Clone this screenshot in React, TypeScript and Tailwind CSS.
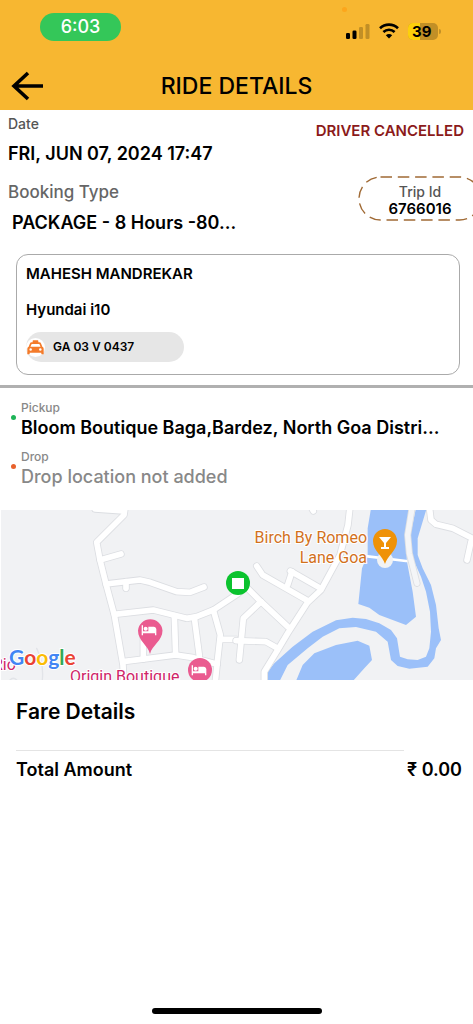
import { MdHotel } from "react-icons/md";

const StatusBar = () => {
  return (
    <div className="flex items-center justify-between pt-[13px] pl-10 pr-8">
      <div className="flex h-7 w-[81px] items-center justify-center rounded-full bg-[#34c759] text-lg font-medium text-white">
        6:03
      </div>
      <div className="relative flex items-center gap-[9px] pt-2">
        {/* mic indicator */}
        <span className="absolute -top-2 -left-1 size-[5px] rounded-full bg-[#fca61c]" />
        <svg width="24" height="16" viewBox="0 0 24 16">
          <rect x="0" y="10" width="4" height="6" rx="1.3" fill="#000" />
          <rect x="6.5" y="7.5" width="4" height="8.500" rx="1.3" fill="#000" />
          <rect x="13" y="4" width="4" height="12" rx="1.3" fill="#c18f26" />
          <rect x="19.500" y="1" width="4" height="15" rx="1.3" fill="#c18f26" />
        </svg>
        <svg width="20" height="16" viewBox="0 0 20 16" fill="none" stroke="#000" strokeWidth="2.6">
          <path d="M1 5.200C6 0.400 14 0.400 19 5.200" />
          <path d="M4.400 9C7.600 6 12.400 6 15.600 9" />
          <path d="M10 15.500L6.800 12.300C8.600 10.600 11.400 10.600 13.200 12.300Z" fill="#000" stroke="none" />
        </svg>
        <div className="flex items-center gap-px">
          <div className="flex h-[17px] w-[30px] overflow-hidden rounded-[5px] bg-[#c18f26]">
            <span className="h-full w-3 bg-[#fdd00a]" />
            <span className="-ml-2 text-[15px] leading-[17px] font-bold">39</span>
          </div>
          <span className="h-[5px] w-[2px] rounded-r-full bg-[#c18f26]" />
        </div>
      </div>
    </div>
  );
};

const Header = () => {
  return (
    <header className="h-[110px] bg-[#f7b731]">
      <StatusBar />
      <div className="mt-[29px] grid grid-cols-[48px_1fr_48px] items-center">
        <button type="button" aria-label="Back" className="pl-[11px]">
          <svg width="33" height="30" viewBox="0 0 33 30" fill="none" stroke="#000" strokeWidth="3.6">
            <path d="M17 2L3 15L17 28M3 15H32" />
          </svg>
        </button>
        <h1 className="text-center text-[23px] leading-8 font-medium">RIDE DETAILS</h1>
      </div>
    </header>
  );
};

const TripId = () => {
  return (
    <div className="relative mt-[33px] -mr-[18px] h-[45px] w-[124px] pt-[7px] text-center">
      <svg className="absolute inset-0" width="124" height="45" fill="none">
        <rect x="1" y="1" width="122" height="43" rx="21.500" stroke="#a06a35" strokeWidth="1.4" strokeDasharray="11.500 5.800" />
      </svg>
      <p className="text-sm leading-[18px] font-medium text-[#555]">Trip Id</p>
      <p className="text-[15px] leading-4 font-semibold">6766016</p>
    </div>
  );
};

const Summary = () => {
  return (
    <section className="flex justify-between pr-[9px] pl-2">
      <div className="pt-1">
        <p className="text-sm leading-5 font-medium text-[#555]">Date</p>
        <p className="mt-2 text-lg leading-6 font-semibold">FRI, JUN 07, 2024 17:47</p>
        <p className="mt-[14px] text-[17px] leading-6 font-medium text-[#666]">Booking Type</p>
        <p className="mt-[7px] pl-1 text-lg leading-6 font-semibold">PACKAGE - 8 Hours -80...</p>
      </div>
      <div className="flex flex-col items-end pt-[9px]">
        <p className="text-[15px] leading-6 font-semibold text-[#8b1a1a]">DRIVER CANCELLED</p>
        <TripId />
      </div>
    </section>
  );
};

const TaxiIcon = () => {
  return (
    <svg width="17" height="15" viewBox="0 0 51 45" className="shrink-0" fill="#f47b2a">
      <path
        fillRule="evenodd"
        d="M17 7V3Q17 1 19 1H32Q34 1 34 3V7H37Q41 7 42.500 11L46 20Q50 22 50 26V43H43V38H8V43H1V26Q1 22 5 20L8.500 11Q10 7 14 7ZM15 12Q13.500 12 13 13.500L10.500 20H40.500L38 13.500Q37.500 12 36 12ZM11 25A3.800 3.800 0 1 0 11 32.600A3.800 3.800 0 1 0 11 25ZM40 25A3.800 3.800 0 1 0 40 32.600A3.800 3.800 0 1 0 40 25Z"
      />
    </svg>
  );
};

const DriverCard = () => {
  return (
    <section className="mt-[19px] mr-[13px] ml-4 h-[121px] rounded-xl border border-[#aaa] pt-[7px] pl-[9px]">
      <p className="text-[15px] leading-6 font-semibold">MAHESH MANDREKAR</p>
      <p className="mt-3 text-[15px] leading-6 font-semibold">Hyundai i10</p>
      <div className="mt-[10px] flex h-[30px] w-[158px] items-center gap-2 rounded-full bg-[#e6e6e6]">
        <span className="flex size-[19px] items-center justify-center rounded-full bg-white">
          <TaxiIcon />
        </span>
        <span className="text-xs font-semibold">GA 03 V 0437</span>
      </div>
    </section>
  );
};

const Stop = ({ label, place, dot, muted }: { label: string; place: string; dot: string; muted?: boolean }) => {
  return (
    <div className="flex items-center gap-[5px]">
      <span className={`mb-[6px] size-[5px] shrink-0 rounded-full ${dot}`} />
      <div className="min-w-0">
        <p className="text-xs leading-4 font-medium text-[#888]">{label}</p>
        <p className={muted ? "text-lg leading-6 font-medium text-[#888]" : "truncate text-lg leading-6 font-semibold"}>
          {place}
        </p>
      </div>
    </div>
  );
};

const roadsLeft = [
  "M285 12L370 18",
  "M375 10L372 30L290 112L300 165L318 237L343 330L369 480L372 540",
  "M300 165L363 147",
  "M318 237L420 225L450 232L530 260L570 262L612 246",
  "M378 230V250",
  "M343 328L460 315L520 330L560 340L590 335L640 315L715 265",
  "M523 332L527 450",
  "M583 338L598 452",
  "M640 315L661 390L652 470L645 540",
  "M369 470L527 450L580 458L652 478",
  "M430 462V400",
  "M661 403H710",
];

const roadsRight = [
  "M0 407L90 410L125 430",
  "M10 465L22 340L75 290",
  "M10 225L75 290L155 365",
  "M342 5L336 60L312 150L255 255L215 292L155 385L125 435L85 500V540",
  "M62 183L80 210L215 287",
  "M163 198L250 248",
  "M168 200L155 240",
  "M580 5L585 45L600 58L650 70L715 103",
  "M705 110L693 165",
  "M225 5L232 18",
];

const Map = () => {
  return (
    <div className="ml-px h-[170px] bg-[#f1f2f4]">
      <svg viewBox="1 0 472 170" preserveAspectRatio="xMidYMid slice" className="h-full w-full">
        {/* water */}
        <g transform="translate(236 -5) scale(0.33333)" fill="#9bc0f9">
          <path d="M405 10L395 70V150L378 190L367 297L400 308L430 330L470 345L510 360L540 335L530 260L512 165L518 10Z" />
          <path d="M540 10L525 80L520 120L530 160L555 215L570 260L582 320L585 380L580 430L570 455L545 465L515 463L492 455L483 400L465 375L430 355L390 342L350 338L300 346L230 380L170 425L115 475L95 500V540H125L155 480L215 430L260 395L310 370L360 366L420 380L455 410L465 465L485 483L520 491L575 485L595 460L600 430L615 405L608 370L600 300L585 240L560 190L545 150V100L572 10Z" />
          <path d="M175 540L200 480L235 445L300 420L365 407L400 422L408 465L385 490L340 540Z" />
        </g>
        {/* roads: grey casing first, white on top */}
        <g fill="none" strokeLinecap="round" strokeLinejoin="round">
          <g transform="translate(0 -5) scale(0.33333)">
            {roadsLeft.map((d) => (
              <path key={d} d={d} stroke="#dcdee2" strokeWidth="22" />
            ))}
            {roadsLeft.map((d) => (
              <path key={d + "w"} d={d} stroke="#fff" strokeWidth="17" />
            ))}
            <path d="M110 430Q135 480 125 540M30 525Q40 515 50 525" stroke="#e2e4e8" strokeWidth="4" />
          </g>
          <g transform="translate(236 -5) scale(0.33333)">
            {roadsRight.map((d) => (
              <path key={d} d={d} stroke="#dcdee2" strokeWidth="22" />
            ))}
            {roadsRight.map((d) => (
              <path key={d + "w"} d={d} stroke="#fff" strokeWidth="17" />
            ))}
            <path d="M395 154L510 168" stroke="#fff" strokeWidth="8" />
            <path d="M528 10L515 90L520 145L543 235" stroke="#dcdee2" strokeWidth="21" />
            <path d="M528 10L515 90L520 145L543 235" stroke="#f4f5f7" strokeWidth="16" />
            <circle cx="447" cy="165" r="24" fill="#f1f2f4" />
          </g>
        </g>
        {/* pins */}
        <path d="M385 54C383 46 373 41 373 31A12 12 0 0 1 397 31C397 41 387 46 385 54Z" fill="#ef9208" />
        <path d="M379 27H391L386 33V37H389V39H381V37H384V33Z" fill="#fff" />
        <path d="M150 144C148 135 138 131 138 120.500A12.300 12.300 0 0 1 162.500 120.500C162.500 131 152 135 150 144Z" fill="#ea5b90" />
        <circle cx="200" cy="160" r="12" fill="#ea5b90" />
        <MdHotel x={141} y={112} width={18} height={18} color="#fff" />
        <MdHotel x={191} y={152} width={18} height={18} color="#fff" />
        <circle cx="238" cy="73" r="12" fill="#0bc32e" />
        <rect x="232" y="68" width="12" height="11" fill="#fff" />
        {/* labels */}
        <g fontFamily="Roboto, sans-serif" fontSize="16" stroke="#fff" strokeWidth="2" paintOrder="stroke">
          <text x="367" y="33" textAnchor="end" fill="#d2711c">Birch By Romeo</text>
          <text x="367" y="53" textAnchor="end" fill="#d2711c">Lane Goa</text>
          <text x="70" y="172" fill="#cf2468">Origin Boutique</text>
          <text x="-7" y="160" fill="#cf2468">Rio</text>
        </g>
        <text x="9" y="155" fontFamily="Lato, sans-serif" fontSize="21" fontWeight="700" stroke="#fff" strokeWidth="2" paintOrder="stroke">
          <tspan fill="#4285f4">G</tspan><tspan fill="#ea4335">o</tspan><tspan fill="#fbbc05">o</tspan><tspan fill="#4285f4">g</tspan><tspan fill="#34a853">l</tspan><tspan fill="#ea4335">e</tspan>
        </text>
      </svg>
    </div>
  );
};

const FareDetails = () => {
  return (
    <section className="pt-[18px] pr-[11px] pl-4">
      <h2 className="text-[21px] leading-7 font-semibold">Fare Details</h2>
      <hr className="mt-6 mr-[58px] border-[#e4e4e4]" />
      <div className="mt-[7px] flex justify-between text-lg leading-6 font-semibold">
        <span>Total Amount</span>
        <span>₹ 0.00</span>
      </div>
    </section>
  );
};

export default function App() {
  return (
    <div className="flex min-h-screen flex-col overflow-hidden bg-white font-['Inter',sans-serif] text-black">
      <Header />
      <main>
        <Summary />
        <DriverCard />
        <hr className="mt-[10px] border-t-[3px] border-[#b0b0b0]" />
        <section className="flex flex-col gap-[9px] pt-3 pr-7 pl-[11px]">
          <Stop label="Pickup" place="Bloom Boutique Baga,Bardez, North Goa Distri..." dot="bg-[#1eb457]" />
          <Stop label="Drop" place="Drop location not added" dot="bg-[#e8612c]" muted />
        </section>
        <div className="mt-[21px]">
          <Map />
        </div>
        <FareDetails />
      </main>
      <div className="mt-auto flex justify-center pb-[10px]">
        <span className="h-[6px] w-[170px] rounded-full bg-black" />
      </div>
    </div>
  );
}
